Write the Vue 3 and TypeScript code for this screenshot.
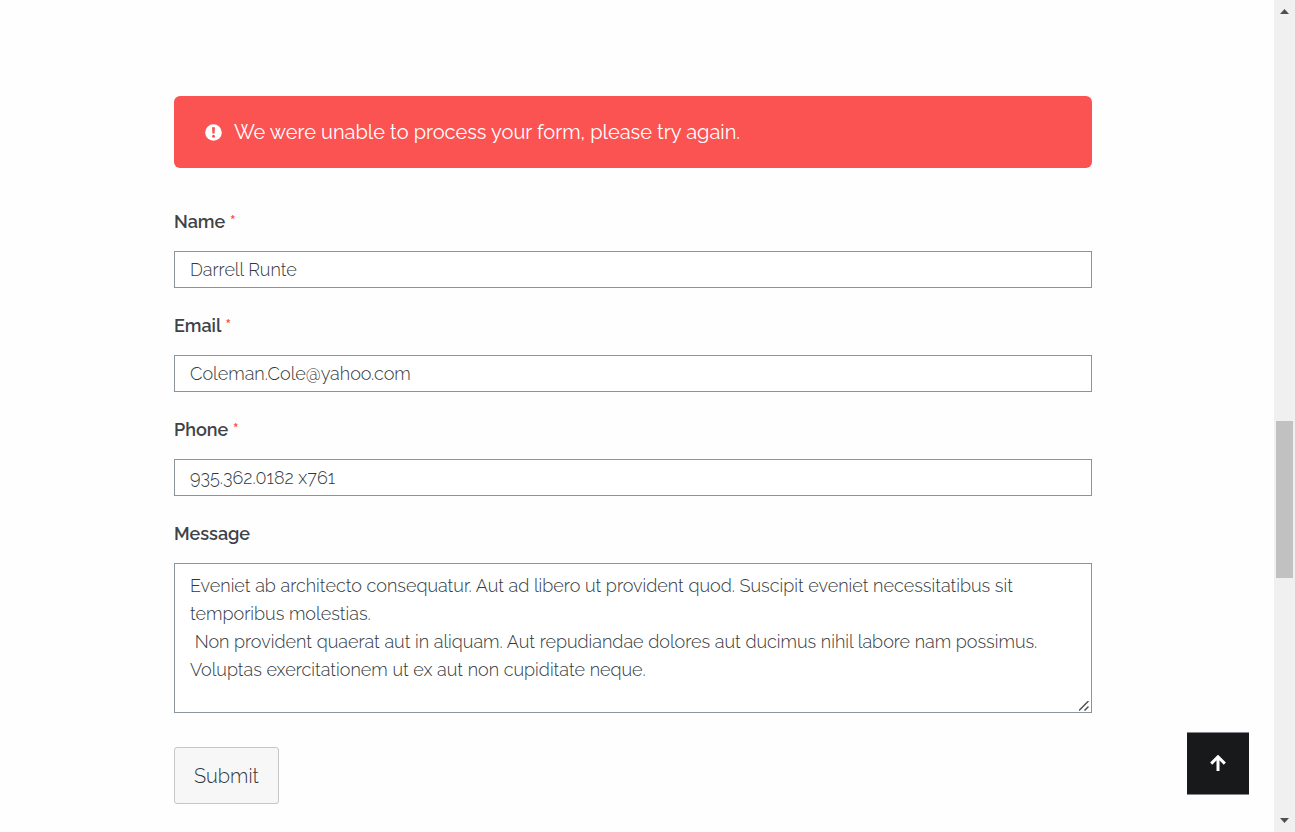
<script setup lang="ts">
import { ref } from 'vue'

interface Field {
  id: string
  label: string
  type: string
  value: string
}

const fields = ref<Field[]>([
  { id: 'name', label: 'Name', type: 'text', value: 'Darrell Runte' },
  { id: 'email', label: 'Email', type: 'email', value: 'Coleman.Cole@yahoo.com' },
  { id: 'phone', label: 'Phone', type: 'tel', value: '935.362.0182 x761' },
])

const message = ref<string>(
  'Eveniet ab architecto consequatur. Aut ad libero ut provident quod. Suscipit eveniet necessitatibus sit temporibus molestias.\n' +
    ' Non provident quaerat aut in aliquam. Aut repudiandae dolores aut ducimus nihil labore nam possimus.\n' +
    'Voluptas exercitationem ut ex aut non cupiditate neque.',
)
</script>

<template>
  <div class="page">
    <main class="content">
      <div class="alert" role="alert">
        <svg class="alert-icon" viewBox="0 0 17 17" aria-hidden="true">
          <circle cx="8.5" cy="8.5" r="8.3" fill="#fff" />
          <path d="M7 3.2h3l-.4 6.3H7.4z" fill="#fb5252" />
          <circle cx="8.5" cy="12.2" r="1.5" fill="#fb5252" />
        </svg>
        <span>We were unable to process your form, please try again.</span>
      </div>

      <form class="form" novalidate @submit.prevent>
        <div v-for="field in fields" :key="field.id" class="field">
          <label :for="field.id">{{ field.label }} <span class="required">*</span></label>
          <input :id="field.id" v-model="field.value" :type="field.type" required />
        </div>
        <div class="field">
          <label for="message">Message</label>
          <div class="message-box">
            <textarea id="message" v-model="message" spellcheck="false"></textarea>
            <svg class="grip" viewBox="0 0 10 10" aria-hidden="true">
              <path d="M0 9.5 9.5 0M5.5 9.5l4-4" fill="none" stroke="#505050" stroke-width="1.5" />
            </svg>
          </div>
        </div>
        <button class="submit" type="submit">Submit</button>
      </form>
    </main>

    <button class="to-top" type="button" aria-label="Back to top">
      <svg viewBox="0 0 16 16" aria-hidden="true">
        <path d="M8 16V2.5M1.2 8.6 8 1.8l6.8 6.8" fill="none" stroke="#fff" stroke-width="3" />
      </svg>
    </button>

    <div class="scrollbar" aria-hidden="true">
      <svg class="arrow" viewBox="0 0 9 5"><path d="M0 5 4.5 0 9 5z" fill="#505050" /></svg>
      <div class="track"><div class="thumb"></div></div>
      <svg class="arrow" viewBox="0 0 9 5"><path d="M0 0 4.5 5 9 0z" fill="#505050" /></svg>
    </div>
  </div>
</template>

<style>
body {
  margin: 0;
  background: #fefefe;
}
</style>

<style scoped>
.page {
  min-height: 100vh;
  padding-right: 21px;
  box-sizing: border-box;
  font-family: Raleway, Lato, "Open Sans", sans-serif;
  font-size: 18px;
  font-weight: 300;
  line-height: 28px;
  color: #32373c;
}

.content {
  padding: 96px 182px 28px 174px;
}

.alert {
  display: flex;
  align-items: center;
  gap: 12px;
  padding: 22px 31px;
  margin-bottom: 40px;
  border-radius: 6px;
  background: #fb5252;
  color: #fff;
  font-size: 20px;
  font-weight: 400;
}

.alert-icon {
  width: 17px;
  height: 17px;
}

.form {
  display: flex;
  flex-direction: column;
  gap: 24px;
}

.field {
  display: flex;
  flex-direction: column;
  gap: 15px;
}

label {
  color: #3e4347;
  font-weight: 600;
}

.required {
  color: #fb5252;
  line-height: 1;
}

input,
textarea {
  box-sizing: border-box;
  width: 100%;
  margin: 0;
  border: 1px solid #8b939c;
  border-radius: 0;
  background: #fff;
  color: inherit;
  font: inherit;
  outline: none;
}

input {
  height: 37px;
  padding: 0 15px;
}

.message-box {
  position: relative;
}

textarea {
  display: block;
  height: 150px;
  padding: 8px 15px;
  resize: none;
}

.grip {
  position: absolute;
  right: 3px;
  bottom: 2px;
  width: 10px;
  height: 10px;
}

.submit {
  align-self: flex-start;
  margin-top: 10px;
  padding: 0 19px;
  height: 57px;
  border: 1px solid #c6c6c6;
  border-radius: 3px;
  background: #f7f7f7;
  color: inherit;
  font: inherit;
  font-size: 20px;
}

.to-top {
  position: fixed;
  right: 46px;
  bottom: 37px;
  display: flex;
  align-items: center;
  justify-content: center;
  width: 62px;
  height: 63px;
  padding: 0 0 1px;
  border: 0 solid #85878a;
  border-width: 1px 0;
  background: #18191b;
}

.to-top svg {
  width: 16px;
  height: 16px;
}

.scrollbar {
  position: fixed;
  top: 0;
  right: 0;
  bottom: 0;
  display: flex;
  flex-direction: column;
  align-items: center;
  gap: 7px;
  width: 21px;
  padding: 9px 0;
  box-sizing: border-box;
  background: #f0f0f0;
}

.arrow {
  width: 9px;
  height: 5px;
}

.track {
  display: grid;
  grid-template-rows: 400fr 157fr 233fr;
  flex: 1;
  width: 17px;
}

.thumb {
  grid-row: 2;
  background: #c1c1c1;
}
</style>
